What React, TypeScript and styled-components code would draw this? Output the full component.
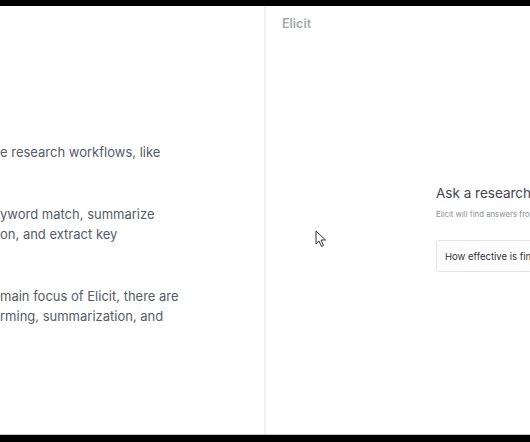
import React from 'react'
import styled, { createGlobalStyle } from 'styled-components'

const GlobalStyle = createGlobalStyle`
  html, body {
    margin: 0;
    padding: 0;
    background: #000;
  }
  body {
    font-family: Inter, 'Noto Sans', sans-serif;
  }
`

const Screen = styled.div`
  width: 530px;
  height: 442px;
  padding: 6px 0 7px;
  box-sizing: border-box;
  background: #000;
  overflow: hidden;
`

const Frame = styled.div`
  position: relative;
  height: 100%;
  display: grid;
  grid-template-columns: 264px 2px 1fr;
  background: #fff;
  border-bottom: 1px solid #c8c8c8;
  box-sizing: border-box;
`

const Notes = styled.div`
  padding-top: 136px;
  overflow: hidden;
`

const Paragraph = styled.p`
  margin: 0 0 22px;
  font-size: 13px;
  line-height: 20px;
  color: #545c68;
  white-space: pre;
`

const Divider = styled.div`
  background: #f1f1f2;
`

const Panel = styled.div`
  display: flex;
  flex-direction: column;
  overflow: hidden;
`

const Brand = styled.div`
  padding: 10px 0 0 16px;
  font-size: 12.5px;
  font-weight: 600;
  color: #a3a7ad;
  line-height: 16px;
`

const Prompt = styled.div`
  margin: 152px 0 0 170px;
  width: 360px;
  display: flex;
  flex-direction: column;
`

const Title = styled.h2`
  margin: 0;
  font-size: 13.5px;
  font-weight: 400;
  color: #3f4651;
  line-height: 18px;
  white-space: nowrap;
`

const Hint = styled.div`
  margin-top: 6px;
  font-size: 7.8px;
  color: #8a9099;
  line-height: 12px;
  white-space: nowrap;
`

const SearchBox = styled.div`
  margin-top: 20px;
  height: 32px;
  border: 1px solid #e2e4e8;
  border-radius: 3px;
  box-sizing: border-box;
  display: flex;
  align-items: center;
  padding-left: 8px;
  font-size: 9.5px;
  color: #2e333a;
  white-space: nowrap;
`

const Pointer = styled.svg`
  position: absolute;
  left: 315px;
  top: 224px;
`

export default function App() {
  return (
    <>
      <GlobalStyle />
      <Screen>
        <Frame>
          <Notes>
            <Paragraph>{'e research workflows, like\n '}</Paragraph>
            <Paragraph>{'yword match, summarize\non, and extract key\n '}</Paragraph>
            <Paragraph>{'main focus of Elicit, there are\nrming, summarization, and'}</Paragraph>
          </Notes>
          <Divider />
          <Panel>
            <Brand>Elicit</Brand>
            <Prompt>
              <Title>Ask a research question</Title>
              <Hint>Elicit will find answers from 175 million papers</Hint>
              <SearchBox>How effective is financial incentive for weight loss?</SearchBox>
            </Prompt>
          </Panel>
          <Pointer width="12" height="18" viewBox="0 0 12 18">
            <path
              d="M1 1 L1 14 L4 11 L6.5 16.5 L8.5 15.5 L6 10 L10.5 10 Z"
              fill="#fff"
              stroke="#333"
              strokeWidth="1"
              strokeLinejoin="round"
            />
          </Pointer>
        </Frame>
      </Screen>
    </>
  )
}
